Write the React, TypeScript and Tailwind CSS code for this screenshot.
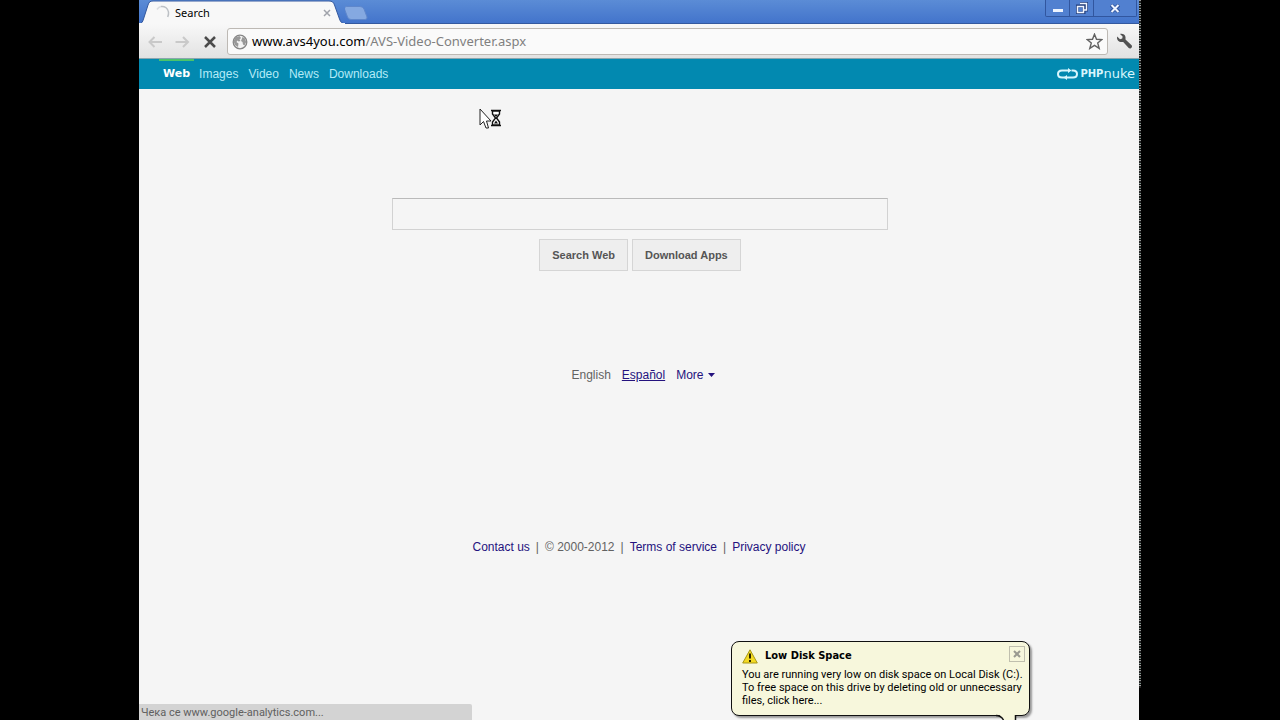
import { useState } from 'react';
import clsx from 'clsx';

const NAV_LINKS = [ 'Web', 'Images', 'Video', 'News', 'Downloads' ];

// Spinning throbber shown while the tab is loading
function Throbber() {
  return (
    <svg width="16" height="16" viewBox="0 0 16 16" fill="none" aria-hidden="true">
      <path d="M6 1.500C10 1 13 3.500 13.500 7c.2 2-.1 3.500-.8 5" stroke="#bcc0c5" strokeWidth="1.500" />
      <path d="M2 4.500Q3.500 2 6 1.500" stroke="#dcdee1" strokeWidth="1.500" />
    </svg>
  );
}

function TabStrip() {
  return (
    <div className="flex h-6 items-stretch border-b border-[#34599f] bg-linear-to-b from-[#5b8cd6] to-[#4374cb]">
      {/* Active tab */}
      <div className="relative h-6 w-[206px]">
        <svg className="absolute inset-0" width="206" height="24" viewBox="0 0 206 24" aria-hidden="true">
          <path d="M0 24C3 23.500 3.500 22 4.500 19L9 5C10 2 11 1 14 1H190C193 1 194.500 2 195.500 5L200.500 19C201.500 22 203 23.500 206 24Z" fill="#f8f8f8" stroke="#34599f" />
          <path d="M0 23.500H206" stroke="#f8f8f8" />
        </svg>
        <div className="relative flex h-full items-center pt-0.5 pr-3 pl-4">
          <Throbber />
          <span className="ml-1 flex-1 text-[11px] text-black">Search</span>
          <button type="button" className="flex size-3 items-center justify-center" aria-label="Close tab">
            <svg width="8" height="8" viewBox="0 0 8 8" stroke="#a0a3ab" strokeWidth="1.500">
              <path d="M1 1l6 6M7 1L1 7" />
            </svg>
          </button>
        </div>
      </div>
      {/* New tab button */}
      <button type="button" className="flex items-start pt-1.5" aria-label="New tab">
        <svg width="26" height="14" viewBox="0 0 26 14">
          <path d="M1.500.5H15Q18 .5 19 3L22 11Q22.500 13.500 20 13.500H6Q3.500 13.500 2.500 11L-.5 3Q-1 .5 1.500.5Z" fill="#85a9e1" stroke="#5f87cb" />
        </svg>
      </button>
      <WindowButtons />
    </div>
  );
}

function WindowButtons() {
  return (
    <div className="mr-0.5 ml-auto flex h-[17px] divide-x divide-[#31569f] rounded-b-xs border border-t-0 border-[#31569f] bg-[#5180d0]">
      <button type="button" className="flex w-6 items-end justify-center pb-1" aria-label="Minimize">
        <svg width="10" height="3" viewBox="0 0 10 3"><path d="M0 0H10V3H0Z" fill="#eef4ff" /></svg>
      </button>
      <button type="button" className="flex w-6 items-center justify-center" aria-label="Restore">
        <svg width="12" height="12" viewBox="0 0 12 12" fill="none">
          <path d="M4 1H11V8H8M1 4H8V11H1Z" stroke="#203d7c" strokeWidth="3" />
          <path d="M4 1.500H10.500V8H8M1.500 4.500H7.500V10.500H1.500Z" stroke="#f1f6ff" strokeWidth="1.500" />
        </svg>
      </button>
      <button type="button" className="flex w-[42px] items-center justify-center" aria-label="Close">
        <svg width="10" height="9" viewBox="0 0 10 9">
          <path d="M1 1l8 7M9 1L1 8" stroke="#31569f" strokeWidth="4" />
          <path d="M1.500 1l7 7M8.500 1l-7 7" stroke="#eef4ff" strokeWidth="2" />
        </svg>
      </button>
    </div>
  );
}

function Toolbar() {
  return (
    <div className="flex h-[35px] items-center border-b border-[#8aa6ae] bg-linear-to-b from-[#f8f8f8] to-[#e2e2e2] pt-px pr-1.5 pl-2">
      <button type="button" className="w-4" aria-label="Back">
        <svg width="16" height="14" viewBox="0 0 16 14" fill="none" stroke="#c9c9c9" strokeWidth="2">
          <path d="M7.500 2L2.500 7l5 5M3 7H15" />
        </svg>
      </button>
      <button type="button" className="ml-3 w-4" aria-label="Forward">
        <svg width="16" height="14" viewBox="0 0 16 14" fill="none" stroke="#c9c9c9" strokeWidth="2">
          <path d="M8 2l5 5-5 5M12.500 7H.5" />
        </svg>
      </button>
      <button type="button" className="ml-3 w-4" aria-label="Stop loading">
        <svg width="14" height="14" viewBox="0 0 14 14" stroke="#4b4b4b" strokeWidth="2.500">
          <path d="M2 2l10 10M12 2L2 12" />
        </svg>
      </button>
      {/* Address bar */}
      <div className="ml-2 flex h-[27px] flex-1 items-center rounded-[3px] border border-[#bdb9b4] bg-[#fafafa] pr-1 pl-1">
        <svg width="16" height="16" viewBox="0 0 16 16" aria-hidden="true">
          <circle cx="8" cy="8" r="6.800" fill="#f3f3f3" stroke="#868686" strokeWidth="1.300" />
          <path d="M3 3.500L7.500 2 9 4 7.500 5.500 8.500 7 6.500 7.500 5.500 6.500 4.500 8 6.500 9.500 6 13 3 11 1.600 7.500ZM10.500 3l2.500 1.500 1.200 3.500-1.700 3.500-1.500-1-.5-2.500L9 7Z" fill="#989898" />
        </svg>
        <span className="ml-1 flex-1 text-[13px] whitespace-nowrap text-[#808080]">
          <span className="text-black">www.avs4you.com</span>/AVS-Video-Converter.aspx
        </span>
        <button type="button" aria-label="Bookmark this page">
          <svg width="17" height="17" viewBox="0 0 17 17" fill="#fafafa" stroke="#626262" strokeWidth="1.400">
            <path d="M8.500 1.200l2 5.100 5.400.3-4.200 3.400 1.500 5.400-4.700-3-4.700 3 1.500-5.400L1.100 6.600l5.400-.3Z" />
          </svg>
        </button>
      </div>
      <button type="button" className="ml-2" aria-label="Settings">
        <svg width="17" height="17" viewBox="0 0 17 17">
          <path d="M1.200 3.400L4 6.200 6.300 5.500 6.600 3.500 4 1C6.500.3 9 1.600 9.500 4L9.500 6.500 15.600 12.200C17 14 14.500 16.500 12.700 15L7.200 9 4.500 8.900C2 8.500.5 6 1.200 3.400Z" fill="#525252" />
        </svg>
      </button>
    </div>
  );
}

function SiteHeader() {
  return (
    <header className="flex h-[30px] items-stretch bg-[#0289b0] pr-1 pl-5">
      <nav className="flex text-[12px]">
        {NAV_LINKS.map( ( label, idx ) => (
          <a
            key={label}
            href="#"
            className={clsx(
              'flex items-center border-t-2 pb-0.5',
              idx === 0
                ? "border-[#4bc36b] px-1 font-['DejaVu_Sans','Verdana',sans-serif] text-[11px] font-bold text-white"
                : 'border-transparent px-[5px] text-[#b5ebf7]'
            )}
          >
            {label}
          </a>
        ) )}
      </nav>
      {/* Brand */}
      <a href="#" className="ml-auto flex items-center gap-0.5 text-[#d8f6fd]" aria-label="PHP Nuke home">
        <svg width="21" height="14" viewBox="0 0 21 14" fill="none" stroke="currentColor" strokeWidth="2">
          <path d="M8 10.500H5Q1 10.500 1 7T5 3.500H12M13 10.500H16Q20 10.500 20 7T16 3.500H14.500M9 10.500H13" />
          <path d="M11 1V6L14.500 3.500ZM10 8V13L6.500 10.500Z" fill="currentColor" stroke="none" />
        </svg>
        <span className="flex items-center leading-4">
          <span className="font-['DejaVu_Sans',sans-serif] text-[10px] font-bold">PHP</span>
          <span className="font-['DejaVu_Sans',sans-serif] text-[13px]">nuke</span>
        </span>
      </a>
    </header>
  );
}

function SearchForm() {
  const [ query, setQuery ] = useState( '' );
  const buttonClass = 'h-8 border border-[#d5d5d5] bg-[#eeeeee] px-3 text-[11px] font-bold text-[#555555]';
  return (
    <form className="mx-auto mt-[109px] w-[496px]" onSubmit={( e ) => e.preventDefault()}>
      <input
        type="text"
        aria-label="Search"
        className="block h-8 w-full border border-[#d2d2d2] border-t-[#bababa] bg-[#f5f5f5] px-2 text-sm outline-none"
        value={query}
        onChange={( e ) => setQuery( e.target.value )}
      />
      <div className="mt-[9px] flex justify-center gap-1">
        <button type="submit" className={buttonClass}>Search Web</button>
        <button type="button" className={buttonClass}>Download Apps</button>
      </div>
    </form>
  );
}

// Windows tray balloon
function DiskSpaceBalloon() {
  return (
    <aside className="absolute right-[109px] bottom-0 w-[299px] pb-1">
      <div className="h-[75px] rounded-lg border border-[#111111] bg-[#f7f7dc] px-2.5 pt-1 shadow-[2px_2px_2px_#999999]">
        <div className="flex h-5 items-center">
          <svg width="16" height="15" viewBox="0 0 16 15" aria-hidden="true">
            <path d="M8 .8L15.300 14H.7Z" fill="#f4da23" stroke="#a69619" strokeLinejoin="round" />
            <path d="M8 4.500V9.500M8 11V13" stroke="#2b2500" strokeWidth="2" />
          </svg>
          <h2 className="ml-[7px] font-['DejaVu_Sans_Condensed','DejaVu_Sans',sans-serif] text-[11px] font-bold text-black">Low Disk Space</h2>
          <button type="button" className="-mr-1.5 mb-1 ml-auto flex size-4 items-center justify-center border border-[#c0bfae]" aria-label="Dismiss">
            <svg width="8" height="8" viewBox="0 0 8 8" stroke="#9a9a90" strokeWidth="2">
              <path d="M1 1l6 6M7 1L1 7" />
            </svg>
          </button>
        </div>
        <p className="mt-0.5 font-['Roboto','Noto_Sans',sans-serif] text-[11px] leading-[13px] whitespace-nowrap text-black">
          You are running very low on disk space on Local Disk (C:).<br />
          To free space on this drive by deleting old or unnecessary<br />
          files, click here...
        </p>
      </div>
      <svg className="absolute right-2.5 bottom-0" width="24" height="6" viewBox="0 0 24 6" aria-hidden="true">
        <path d="M1 0Q5 1 7 6H20V0Z" fill="#f7f7dc" />
        <path d="M0 1.500Q5 1.500 7.500 6M19.500 1V6" fill="none" stroke="#111111" strokeWidth="1.500" />
      </svg>
    </aside>
  );
}

export default function App() {
  const linkClass = 'text-[#24127e]';
  return (
    <div className="flex min-h-screen bg-black pr-[139px] pl-[139px] font-['Liberation_Sans','Arial',sans-serif]">
      <div className="relative flex flex-1 flex-col overflow-hidden bg-[#f5f5f5]">
        <div className="font-['Noto_Sans','DejaVu_Sans',sans-serif]">
          <TabStrip />
          <Toolbar />
        </div>
        <SiteHeader />
        <main className="flex-1 pl-0.5 text-[12px] leading-4 text-[#626262]">
          <SearchForm />
          <div className="mt-24 flex justify-center gap-[11px] pl-1.5">
            <span>English</span>
            <a href="#" className="text-[#24127e] underline">Español</a>
            <button type="button" className="flex items-center gap-1 text-[#24127e]">
              More
              <svg width="7" height="4" viewBox="0 0 7 4" aria-hidden="true"><path d="M0 0H7L3.500 4Z" fill="currentColor" /></svg>
            </button>
          </div>
          <footer className="mt-[156px] flex justify-center gap-1.5 pr-0.5 pb-40">
            <a href="#" className={linkClass}>Contact us</a>
            <span>|</span>
            <span>© 2000-2012</span>
            <span>|</span>
            <a href="#" className={linkClass}>Terms of service</a>
            <span>|</span>
            <a href="#" className={linkClass}>Privacy policy</a>
          </footer>
        </main>
        {/* Loading status bubble */}
        <div className="absolute bottom-0 left-0 h-4 w-1/3 rounded-tr-xs bg-[#d3d3d3] pl-0.5 font-['Roboto','Noto_Sans',sans-serif] text-[11px] leading-[18px] text-[#606060]">
          Чека се www.google-analytics.com...
        </div>
        <DiskSpaceBalloon />
        {/* Busy mouse pointer */}
        <svg className="absolute top-[108px] left-[340px]" width="24" height="22" viewBox="0 0 24 22" aria-hidden="true">
          <path d="M1 1V17L4.500 13.500 7 20H9.500L7.500 13H12Z" fill="#ffffff" stroke="#222222" />
          <path d="M12 2.500H22M12 17.500H22M13.500 3V6L16.500 10 13.500 14V17H20.500V14L17.500 10 20.500 6V3Z" fill="#ffffff" stroke="#111111" strokeWidth="1.400" />
          <path d="M15 6.500H19L17 9ZM15 15.500L17 12.500 19 15.500Z" fill="#111111" />
        </svg>
      </div>
      {/* Worn edge of the desktop */}
      <div className="mb-8 w-0.5 bg-[repeating-linear-gradient(180deg,#9a9a9a_0_1px,#222222_1px_3px,#7d8f88_3px_4px,#111111_4px_5px)]" />
    </div>
  );
}
